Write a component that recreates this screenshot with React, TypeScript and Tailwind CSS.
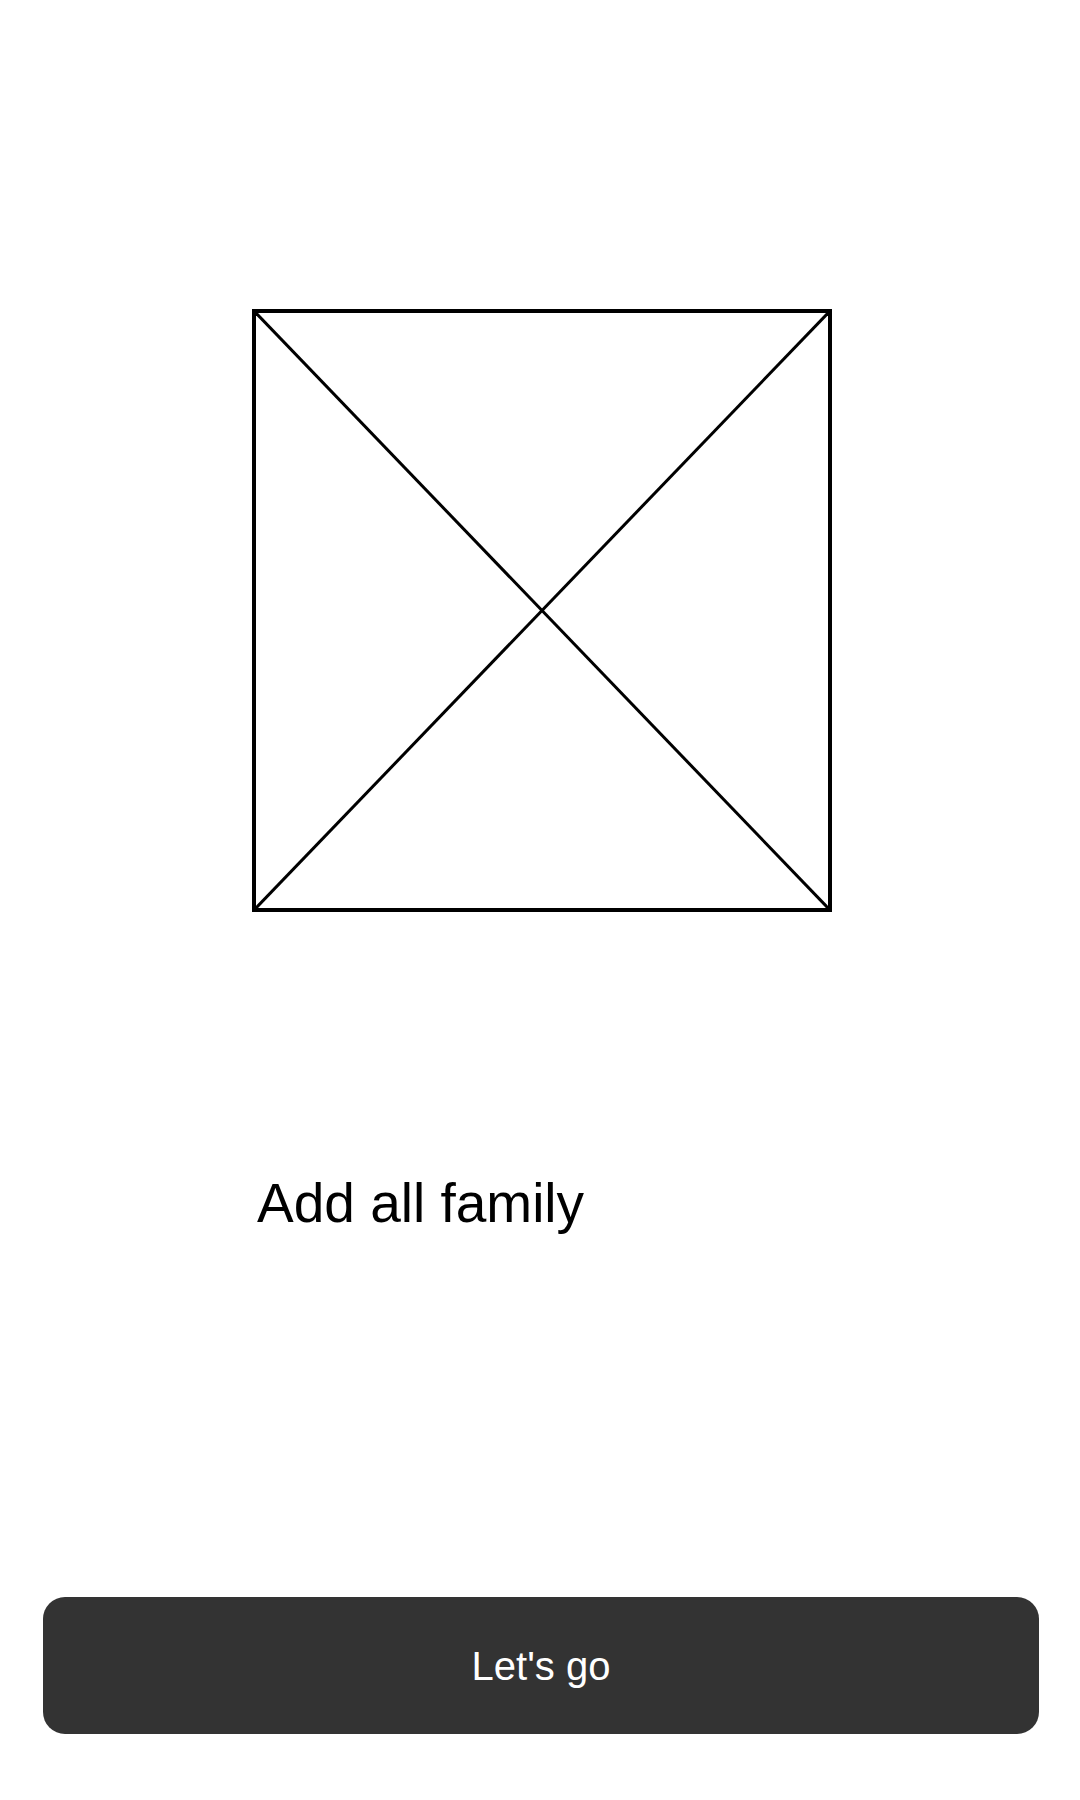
import React from 'react';

const Placeholder: React.FC = () => (
  <div className="relative ml-[252px] h-[603px] w-[580px] border-4 border-black">
    {/* crossed placeholder image */}
    <svg className="absolute inset-0 h-full w-full" viewBox="0 0 100 100" preserveAspectRatio="none">
      <line x1="0" y1="0" x2="100" y2="100" stroke="#000" strokeWidth="3" vectorEffect="non-scaling-stroke" />
      <line x1="100" y1="0" x2="0" y2="100" stroke="#000" strokeWidth="3" vectorEffect="non-scaling-stroke" />
    </svg>
  </div>
);

export default function App() {
  return (
    <div className="flex h-[1800px] w-[1080px] flex-col bg-white pt-[309px] font-['Liberation_Sans',Arial,sans-serif]">
      <Placeholder />
      <div className="ml-[257px] mt-[264px] text-[55px] leading-none text-black">Add all family</div>
      <button className="mx-[43px] mt-[366px] flex h-[137px] w-[996px] items-center justify-center rounded-[22px] bg-[#333333] text-[40px] text-white">
        Let's go
      </button>
    </div>
  );
}
